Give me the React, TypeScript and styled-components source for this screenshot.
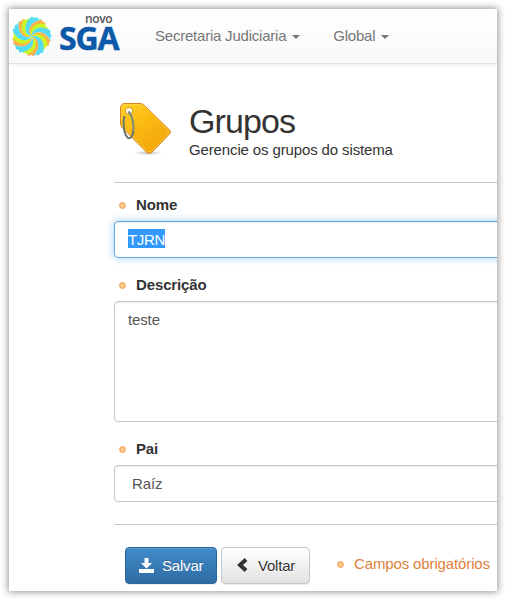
import React from "react";
import styled, { createGlobalStyle, css } from "styled-components";

const GlobalStyle = createGlobalStyle`
  * { box-sizing: border-box; }
  body { margin: 0; background: #fff; overflow: hidden; }
`;

const Page = styled.div`
  width: 505px;
  height: 599px;
  padding: 9px 8px 8px 9px;
  background: #fff;
  font: 15px/21px "Liberation Sans", Arial, sans-serif;
  letter-spacing: -0.13px;
  color: #333;
`;

const Sheet = styled.div`
  height: 582px;
  display: flex;
  flex-direction: column;
  background: #fff;
  box-shadow: 0 0 7px 1px rgba(0, 0, 0, 0.42);
`;

const SheetClip = styled.div`
  flex: 1;
  overflow: hidden;
`;

const Navbar = styled.nav`
  height: 55px;
  display: flex;
  align-items: flex-start;
  background: linear-gradient(#fff, #f8f8f8);
  border-bottom: 1px solid #e2e2e2;
  box-shadow: 0 1px 4px rgba(0, 0, 0, 0.07);
`;

const Brand = styled.div`
  width: 146px;
  display: flex;
  padding: 7px 0 0 1px;
`;

const BrandText = styled.div`
  display: flex;
  flex-direction: column;
  width: 66px;
  margin-left: 6px;
  font-family: "Open Sans", sans-serif;
`;

const BrandTop = styled.span`
  height: 6px;
  margin-left: 26px;
  font-size: 12px;
  line-height: 6px;
  font-weight: 600;
  letter-spacing: -0.4px;
  color: #555;
`;

const BrandName = styled.span`
  font-size: 32px;
  line-height: 32px;
  font-weight: 700;
  letter-spacing: -1.1px;
  color: #0b59a8;
  -webkit-text-stroke: 0.5px #0b59a8;
`;

const NavItem = styled.a`
  display: flex;
  align-items: center;
  gap: 6px;
  height: 53px;
  margin-right: 33px;
  color: #777;
  letter-spacing: -0.22px;
  white-space: nowrap;
`;

const Caret = styled.i`
  margin-top: 3px;
  border: 4px solid transparent;
  border-top-color: #777;
  border-bottom: 0;
`;

const Content = styled.main`
  width: 384px;
  margin-left: 105px;
`;

const Header = styled.header`
  height: 119px;
  display: flex;
  padding: 37px 0 0 4px;
  border-bottom: 1px solid #c8c8c8;
`;

const Heading = styled.div`
  margin-left: 15px;
`;

const Title = styled.h1`
  margin: 0;
  font-size: 34px;
  line-height: 40px;
  font-weight: 400;
  letter-spacing: -0.9px;
`;

const Subtitle = styled.p`
  margin: -2px 0 0;
  line-height: 21px;
`;

const Field = styled.div<{ $gap: number }>`
  margin-top: ${(p) => p.$gap}px;
`;

const Label = styled.label`
  height: 27px;
  display: flex;
  align-items: flex-start;
  font-weight: 700;
`;

const Bullet = styled.i`
  flex: none;
  width: 7px;
  height: 7px;
  margin: 8px 10px 0 5px;
  border-radius: 50%;
  border: 1px solid #f0a45e;
  background: radial-gradient(#ffdca0 0, #fbb66e 70%);
`;

const Control = styled.div<{ $height: number; $focus?: boolean; $indent?: number }>`
  width: 410px;
  height: ${(p) => p.$height}px;
  padding: 7px 13px;
  padding-left: ${(p) => p.$indent ?? 13}px;
  border: 1px solid #c6c6c6;
  border-radius: 4px;
  background: #fff;
  color: #555;
  box-shadow: inset 0 1px 1px rgba(0, 0, 0, 0.075);
  ${(p) =>
    p.$focus &&
    css`
      border-color: #66a9e2;
      box-shadow: inset 0 1px 1px rgba(0, 0, 0, 0.075), 0 0 8px rgba(102, 175, 233, 0.6);
    `}
`;

const Selected = styled.span`
  display: inline-block;
  height: 19px;
  line-height: 21px;
  letter-spacing: -0.35px;
  background: #3399ff;
  color: #fff;
`;

const Actions = styled.footer`
  display: flex;
  height: 60px;
  margin-top: 22px;
  padding: 22px 0 0 11px;
  border-top: 1px solid #c8c8c8;
`;

const Button = styled.button<{ $primary?: boolean }>`
  display: flex;
  align-items: center;
  width: ${(p) => (p.$primary ? 92 : 89)}px;
  height: 37px;
  margin: 0 4px 0 0;
  padding: 0 0 0 ${(p) => (p.$primary ? 13 : 14)}px;
  font: inherit;
  letter-spacing: -0.2px;
  border-radius: 4px;
  border: 1px solid ${(p) => (p.$primary ? "#2b669a" : "#c6c6c6")};
  color: ${(p) => (p.$primary ? "#fff" : "#333")};
  background: ${(p) =>
    p.$primary ? "linear-gradient(#428bca, #2d6ca2)" : "linear-gradient(#fff, #e2e2e2)"};
  box-shadow: inset 0 1px 0 rgba(255, 255, 255, 0.15), 0 1px 1px rgba(0, 0, 0, 0.075);
  text-shadow: ${(p) => (p.$primary ? "0 -1px 0 rgba(0, 0, 0, 0.2)" : "0 1px 0 #fff")};
`;

const ButtonText = styled.span<{ $gap: number }>`
  margin-left: ${(p) => p.$gap}px;
`;

const Required = styled.div`
  display: flex;
  margin: 6px 0 0 18px;
  color: #e0813b;
  white-space: nowrap;
`;

const turn = (x: number, y: number, deg: number) => {
  const a = (deg * Math.PI) / 180;
  const px = x * Math.cos(a) - y * Math.sin(a);
  const py = x * Math.sin(a) + y * Math.cos(a);
  return `${px.toFixed(2)} ${py.toFixed(2)}`;
};

// One curved blade with a ragged rim, spanning the angles from..to.
const blade = (from: number, to: number, reach: number) => {
  const mid = (from + to) / 2;
  return [
    `M0 0C${turn(-7, -3, from)} ${turn(-8, -13, from)} ${turn(2, -reach, from)}`,
    `L${turn(2, -reach + 1.2, from + 6)}L${turn(2, -reach, mid)}`,
    `L${turn(2, -reach + 1.4, mid + 5)}L${turn(2, -reach, to)}`,
    `C${turn(-8, -13, to)} ${turn(-7, -3, to)} 0 0Z`,
  ].join("");
};

const Pinwheel = () => (
  <svg width="43" height="41" viewBox="-21.5 -20.5 43 41">
    {[0, 72, 144, 216, 288].map((a) => (
      <g key={a}>
        <path d={blade(a - 46, a - 22, 19.5)} fill="#ffb04a" />
        <path d={blade(a - 30, a - 3, 18.5)} fill="#cdf526" />
        <path d={blade(a - 5, a + 27, 20)} fill="#55dcf5" />
      </g>
    ))}
  </svg>
);

const TagIcon = () => (
  <svg width="56" height="56" viewBox="0 0 56 56">
    <defs>
      <linearGradient id="tagFill" x1="0" y1="0" x2="0.7" y2="1">
        <stop offset="0" stopColor="#ffd22b" />
        <stop offset="0.45" stopColor="#fbba12" />
        <stop offset="1" stopColor="#f2a50a" />
      </linearGradient>
      <radialGradient id="tagShadow">
        <stop offset="0" stopColor="#777" stopOpacity="0.5" />
        <stop offset="1" stopColor="#999" stopOpacity="0" />
      </radialGradient>
    </defs>
    <ellipse cx="30" cy="52" rx="15" ry="2.5" fill="url(#tagShadow)" />
    <path
      d="M5 2.5H22Q24.5 2.5 26.5 4.5L51.5 29Q53.5 31 51.5 33L33.5 51.5Q31 53.5 28.5 51L4 26.5Q2.5 25 2.5 22V5.5Z"
      fill="url(#tagFill)"
      stroke="#dc8619"
      strokeLinejoin="round"
    />
    <path d="M5.5 3.5H22Q24.5 3.8 25.7 5L50.5 29.7Q51.8 31 50.5 32.3L33 50.5Q31 52 29.3 50.2L5 26Q3.5 24.5 3.5 22V6Z" fill="none" stroke="#ffd24d" strokeOpacity="0.7" />
    <circle cx="11" cy="10" r="3.6" fill="#fffaf0" stroke="#d99a20" />
    <path d="M6.5 15C4.500 21 5.5 32 9.5 36.500C12.5 39 15.800 34 15.500 26C15.200 19 14 14 10.500 10.500" fill="none" stroke="#65736c" strokeWidth="1.9" />
    <path d="M12 11C14.500 15.500 16 22 15.300 30" fill="none" stroke="#b5b89a" strokeWidth="0.6" />
  </svg>
);

const SaveIcon = () => (
  <svg width="15" height="15" viewBox="0 0 15 15" fill="#fff">
    <path d="M5.5 0H9.5V5H13L7.5 10.5L2 5H5.5ZM0 11H15V15H0Z" />
    <path d="M12 12.500H13" stroke="#b9d1e6" />
  </svg>
);

const BackIcon = () => (
  <svg width="12" height="15" viewBox="0 0 12 15">
    <path d="M10 1.500L4 7L10 12.500" fill="none" stroke="#333" strokeWidth="4" />
  </svg>
);

export default function App() {
  return (
    <Page>
      <GlobalStyle />
      <Sheet>
        <SheetClip>
          <Navbar>
            <Brand>
              <Pinwheel />
              <BrandText>
                <BrandTop>novo</BrandTop>
                <BrandName>SGA</BrandName>
              </BrandText>
            </Brand>
            <NavItem>Secretaria Judiciaria<Caret /></NavItem>
            <NavItem>Global<Caret /></NavItem>
          </Navbar>
          <Content>
            <Header>
              <TagIcon />
              <Heading>
                <Title>Grupos</Title>
                <Subtitle>Gerencie os grupos do sistema</Subtitle>
              </Heading>
            </Header>
            <Field $gap={11}>
              <Label><Bullet />Nome</Label>
              <Control $height={37} $focus><Selected>TJRN</Selected></Control>
            </Field>
            <Field $gap={16}>
              <Label><Bullet />Descrição</Label>
              <Control $height={121}>teste</Control>
            </Field>
            <Field $gap={16}>
              <Label><Bullet />Pai</Label>
              <Control $height={37} $indent={17}>Raíz</Control>
            </Field>
            <Actions>
              <Button $primary><SaveIcon /><ButtonText $gap={8}>Salvar</ButtonText></Button>
              <Button><BackIcon /><ButtonText $gap={10}>Voltar</ButtonText></Button>
              <Required><Bullet />Campos obrigatórios</Required>
            </Actions>
          </Content>
        </SheetClip>
      </Sheet>
    </Page>
  );
}
